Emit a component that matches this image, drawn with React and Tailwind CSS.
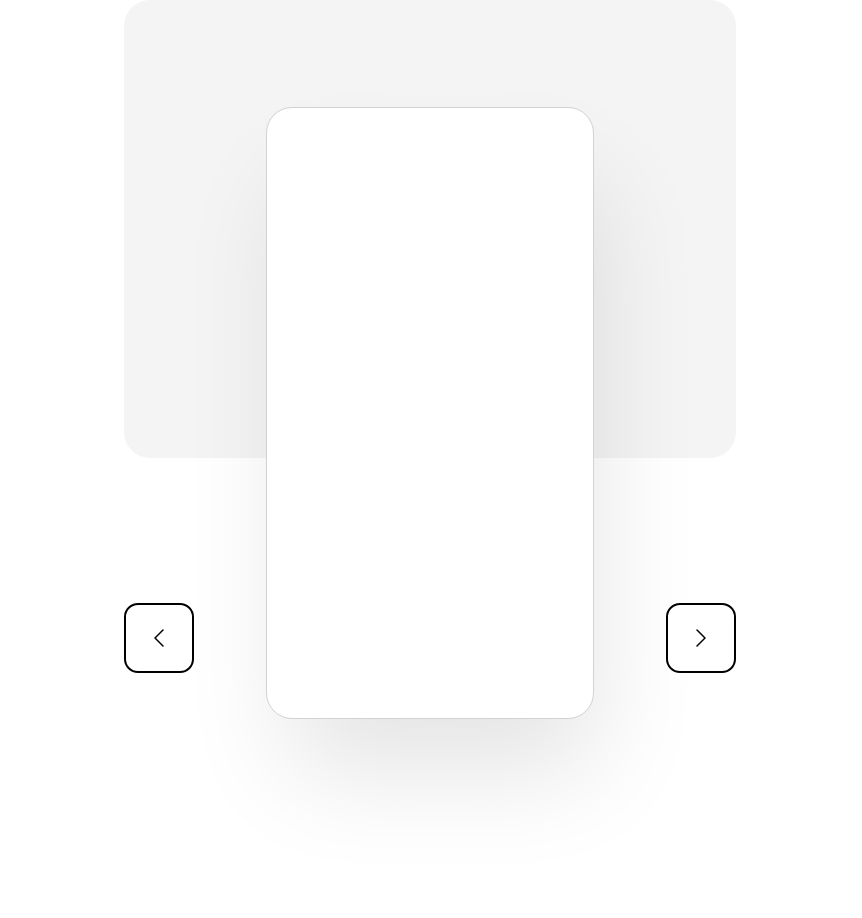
import React from "react";

function Chevron({ dir }) {
  return (
    <svg width="10" height="18" viewBox="0 0 10 18" fill="none" stroke="#000" strokeWidth="1.5" strokeLinecap="round" strokeLinejoin="round">
      {dir === "left" ? <path d="M9 1 L1 9 L9 17" /> : <path d="M1 1 L9 9 L1 17" />}
    </svg>
  );
}

function NavButton({ dir }) {
  return (
    <button className="w-[70px] h-[70px] mb-[46px] rounded-[14px] border-2 border-black bg-white flex items-center justify-center">
      <Chevron dir={dir} />
    </button>
  );
}

export default function App() {
  return (
    <div className="min-h-[918px] bg-white">
      <div className="w-[612px] ml-[124px]">
        {/* Backdrop panel */}
        <div className="h-[458px] rounded-[26px] bg-[#f4f4f4]" />

        {/* Carousel row */}
        <div className="-mt-[351px] relative flex items-end justify-between">
          <NavButton dir="left" />
          <div className="w-[328px] h-[612px] rounded-[26px] bg-white border border-[#d2d2d2] shadow-[12px_64px_110px_-12px_rgba(0,0,0,0.11)]" />
          <NavButton dir="right" />
        </div>
      </div>
    </div>
  );
}
